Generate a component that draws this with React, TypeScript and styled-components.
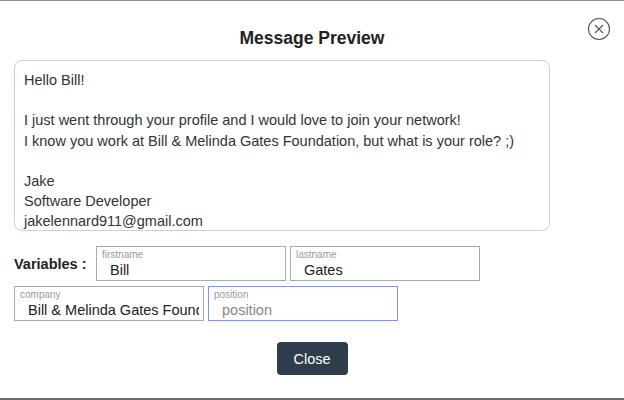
import styled, { createGlobalStyle } from 'styled-components'

const GlobalStyle = createGlobalStyle`
  html, body {
    margin: 0;
    padding: 0;
    background: #ffffff;
  }
  body {
    font-family: 'Liberation Sans', Arial, sans-serif;
  }
`

const message = `Hello Bill!

I just went through your profile and I would love to join your network!
I know you work at Bill & Melinda Gates Foundation, but what is your role? ;)

Jake
Software Developer
jakelennard911@gmail.com`

const fields = [
  { name: 'firstname', value: 'Bill' },
  { name: 'lastname', value: 'Gates' },
  { name: 'company', value: 'Bill & Melinda Gates Foundation' },
  { name: 'position', value: '', focused: true },
]

const App = () => {
  return (
    <>
      <GlobalStyle />
      <Modal>
        <CloseIcon aria-label="close">
          <svg width="24" height="24" viewBox="0 0 24 24" fill="none">
            <circle cx="12" cy="12" r="10.5" stroke="#555" strokeWidth="1.1" />
            <path d="M8 8 L16 16 M16 8 L8 16" stroke="#555" strokeWidth="1.1" />
          </svg>
        </CloseIcon>
        <Title>Message Preview</Title>
        <MessageBox>{message}</MessageBox>
        <Variables>
          <VarLabel>Variables :</VarLabel>
          {fields.map((f) => (
            <Field key={f.name} $focused={f.focused}>
              <FieldLabel>{f.name}</FieldLabel>
              <FieldInput
                defaultValue={f.value}
                placeholder={f.name}
                autoFocus={f.focused}
              />
            </Field>
          ))}
        </Variables>
        <Footer>
          <Button type="button">Close</Button>
        </Footer>
      </Modal>
    </>
  )
}

const Modal = styled.div`
  position: relative;
  box-sizing: border-box;
  height: 400px;
  padding: 0 14px;
  border-top: 1px solid #8c8c8c;
  border-bottom: 2px solid #6e6e6e;
  background: #fff;
`

const CloseIcon = styled.div`
  position: absolute;
  top: 16px;
  right: 13px;
  width: 24px;
  height: 24px;
  cursor: pointer;
`

const Title = styled.h2`
  margin: 0;
  padding-top: 27px;
  height: 32px;
  line-height: 20px;
  text-align: center;
  font-size: 17.5px;
  font-weight: bold;
  color: #222;
`

const MessageBox = styled.div`
  box-sizing: border-box;
  width: 536px;
  height: 171px;
  padding: 9px 9px 0;
  border: 1px solid #cfcfcf;
  border-radius: 8px;
  overflow: hidden;
  white-space: pre-wrap;
  font-size: 14.5px;
  line-height: 20.2px;
  color: #333;
`

const Variables = styled.div`
  display: flex;
  flex-wrap: wrap;
  align-items: center;
  column-gap: 4px;
  row-gap: 5px;
  width: 536px;
  margin-top: 15px;
`

const VarLabel = styled.div`
  flex: 0 0 78px;
  font-size: 14.5px;
  font-weight: bold;
  color: #222;
`

const Field = styled.div<{ $focused?: boolean }>`
  box-sizing: border-box;
  display: flex;
  flex-direction: column;
  width: 190px;
  height: 35px;
  padding: 2px 0 1px;
  border: 1px solid ${(p) => (p.$focused ? '#7f93f3' : '#aaaaaa')};
  background: #fff;
`

const FieldLabel = styled.div`
  padding-left: 5px;
  font-size: 10px;
  line-height: 12px;
  color: #9a9a9a;
`

const FieldInput = styled.input`
  box-sizing: border-box;
  width: 100%;
  height: 19px;
  padding: 0 4px 0 13px;
  border: none;
  outline: none;
  background: transparent;
  font-family: 'Liberation Sans', Arial, sans-serif;
  font-size: 14.5px;
  color: #222;

  &::placeholder {
    color: #888;
  }
`

const Footer = styled.div`
  display: flex;
  justify-content: center;
  margin-top: 21px;
`

const Button = styled.button`
  width: 71px;
  height: 33px;
  border: none;
  border-radius: 4px;
  background-color: #2e3d4b;
  color: #fff;
  font-family: 'Liberation Sans', Arial, sans-serif;
  font-size: 14.5px;
  cursor: pointer;
`

export default App
